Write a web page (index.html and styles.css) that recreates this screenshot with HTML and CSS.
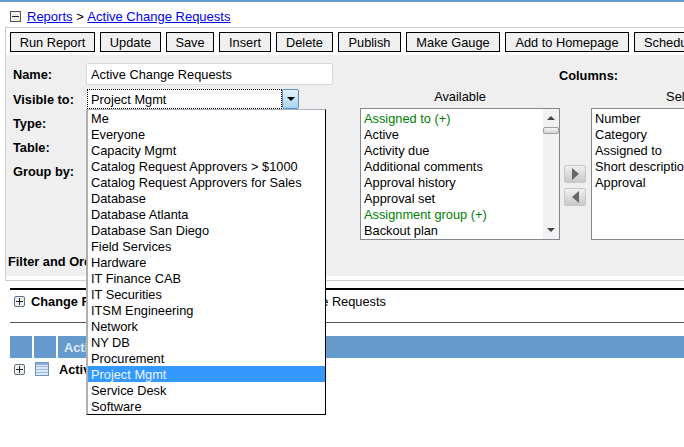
FILE: index.html
```html
<!DOCTYPE html>
<html>

<head>
    <meta name="viewport" content="width=device-width, initial-scale=1" />
    <title>Active Change Requests</title>
    <link rel="stylesheet" href="styles.css">
</head>

<body>
    <div class="topbar"></div>

    <div class="crumbs">
        <span class="box minus"></span>
        <a href="#">Reports</a> &gt; <a href="#">Active Change Requests</a>
    </div>

    <div class="panel">
        <div class="toolbar">
            <button class="w85">Run Report</button>
            <button class="w61">Update</button>
            <button class="w48">Save</button>
            <button class="w52">Insert</button>
            <button class="w57">Delete</button>
            <button class="w63">Publish</button>
            <button class="w94">Make Gauge</button>
            <button class="w124">Add to Homepage</button>
            <button class="w90">Schedule</button>
        </div>

        <div class="form">
            <div class="fields">
                <div class="row name-row">
                    <label>Name:</label>
                    <input class="name" value="Active Change Requests">
                </div>
                <div class="row">
                    <label>Visible to:</label>
                    <div class="combo">
                        <span class="combo-text">Project Mgmt</span>
                        <span class="combo-btn"></span>
                    </div>
                </div>
                <div class="row"><label>Type:</label></div>
                <div class="row"><label>Table:</label></div>
                <div class="row"><label>Group by:</label></div>
            </div>

            <div class="columns">
                <div class="columns-title">Columns:</div>
                <div class="picker">
                    <div class="pick-col">
                        <div class="pick-title">Available</div>
                        <div class="listbox available">
                            <div class="items">
                                <div class="green">Assigned to (+)</div>
                                <div>Active</div>
                                <div>Activity due</div>
                                <div>Additional comments</div>
                                <div>Approval history</div>
                                <div>Approval set</div>
                                <div class="green">Assignment group (+)</div>
                                <div>Backout plan</div>
                            </div>
                            <div class="scroll">
                                <span class="arrow up"></span>
                                <span class="thumb"></span>
                                <span class="arrow down"></span>
                            </div>
                        </div>
                    </div>
                    <div class="movers">
                        <span class="mover"><i class="tri right"></i></span>
                        <span class="mover"><i class="tri left"></i></span>
                    </div>
                    <div class="pick-col">
                        <div class="pick-title">Selected</div>
                        <div class="listbox selected">
                            <div class="items">
                                <div>Number</div>
                                <div>Category</div>
                                <div>Assigned to</div>
                                <div>Short description</div>
                                <div>Approval</div>
                            </div>
                        </div>
                    </div>
                </div>
            </div>
        </div>

        <div class="filter">Filter and Order</div>
        <div class="panel-foot"></div>
    </div>

    <div class="section">
        <span class="box plus"></span>
        <b>Change Requests</b>
        <span class="section-name">Active Change Requests</span>
    </div>

    <div class="table-head">
        <div class="cell w22"></div>
        <div class="cell w22"></div>
        <div class="cell grow">Active</div>
    </div>
    <div class="table-row">
        <span class="box plus"></span>
        <svg class="table-icon" width="14" height="14" viewBox="0 0 14 14">
            <rect x="0.5" y="0.5" width="13" height="13" fill="#dce8f7" stroke="#6a93c4" />
            <path d="M1 4.5h12M1 7.5h12M1 10.5h12" stroke="#9dbbe0" />
            <rect x="1" y="1" width="12" height="2" fill="#8fb0db" />
        </svg>
        <b>Active Change Requests</b>
    </div>

    <div class="dropdown">
        <div>Me</div>
        <div>Everyone</div>
        <div>Capacity Mgmt</div>
        <div>Catalog Request Approvers &gt; $1000</div>
        <div>Catalog Request Approvers for Sales</div>
        <div>Database</div>
        <div>Database Atlanta</div>
        <div>Database San Diego</div>
        <div>Field Services</div>
        <div>Hardware</div>
        <div>IT Finance CAB</div>
        <div>IT Securities</div>
        <div>ITSM Engineering</div>
        <div>Network</div>
        <div>NY DB</div>
        <div>Procurement</div>
        <div class="current">Project Mgmt</div>
        <div>Service Desk</div>
        <div>Software</div>
    </div>
</body>

</html>
```

FILE: styles.css
```css
html, body {
    margin: 0;
    padding: 0;
    height: 447px;
    overflow: hidden;
}

body {
    position: relative;
    background-color: white;
    font-family: "Liberation Sans", Arial, sans-serif;
    font-size: 12.8px;
    color: #000;
}

.topbar {
    height: 2px;
    background-color: #6699cc;
}

.crumbs {
    height: 25px;
    padding: 4px 0 0 10px;
    box-sizing: border-box;
    display: flex;
    align-items: center;
    white-space: pre;
    font-size: 13px;
    line-height: 16px;
}

.crumbs a {
    color: #0000ee;
}

.box {
    display: inline-block;
    position: relative;
    width: 9px;
    height: 9px;
    border: 1px solid #555;
    background-color: #eee;
    flex: none;
}

.box::before {
    content: "";
    position: absolute;
    left: 1px;
    right: 1px;
    top: 4px;
    height: 1px;
    background-color: #222;
}

.box.plus {
    border-color: #5b7185;
    border-radius: 2px;
}

.box.plus::after {
    content: "";
    position: absolute;
    top: 1px;
    bottom: 1px;
    left: 4px;
    width: 1px;
    background-color: #222;
}

.crumbs .box {
    margin-right: 6px;
}

/* panel */
.panel {
    margin-left: 5px;
    border-left: 1px solid #ccc;
    border-top: 1px solid #ccc;
    border-bottom: 1px solid #ccc;
    height: 252px;
    background-color: #efefef;
    display: flex;
    flex-direction: column;
    overflow: hidden;
}

.toolbar {
    height: 27px;
    flex: none;
    background-color: white;
    display: flex;
    gap: 5px;
    padding: 4px 0 0 4px;
    box-sizing: border-box;
}

.toolbar button {
    flex: none;
    height: 20px;
    padding: 0;
    border: 1px solid #000;
    background-color: #f0f0f0;
    font-family: inherit;
    font-size: 12.8px;
    color: #000;
    white-space: nowrap;
    overflow: hidden;
    text-align: center;
}

.w85 { width: 85px; }
.w61 { width: 61px; }
.w48 { width: 48px; }
.w52 { width: 52px; }
.w57 { width: 57px; }
.w63 { width: 63px; }
.w94 { width: 94px; }
.w124 { width: 124px; }
.toolbar .w90 { width: 90px; text-align: left; padding-left: 9px; }

.form {
    display: flex;
    height: 199px;
    flex: none;
}

.fields {
    width: 332px;
    padding: 8px 0 0 7px;
    box-sizing: border-box;
    flex: none;
}

.row {
    display: flex;
    align-items: center;
    height: 24px;
}

.row label {
    width: 74px;
    font-weight: bold;
    flex: none;
}

.name-row {
    margin-top: -1px;
    margin-bottom: 1px;
}

.name {
    width: 247px;
    height: 22px;
    box-sizing: border-box;
    padding: 0 4px;
    border: 1px solid #d8d8d8;
    background-color: white;
    font-family: inherit;
    font-size: 12.8px;
    color: #000;
    border-radius: 2px;
    margin: 0 0 0 -1px;
}

.combo {
    width: 212px;
    height: 20px;
    display: flex;
    background-color: white;
}

.combo-text {
    flex: 1;
    border: 1px dotted #000;
    padding-left: 3px;
    line-height: 19px;
}

.combo-btn {
    position: relative;
    width: 17px;
    flex: none;
    border: 1px solid #5a8fc0;
    border-radius: 2px;
    box-sizing: border-box;
    background: linear-gradient(#e6f3fb, #a8d3ef);
}

.combo-btn::after {
    content: "";
    position: absolute;
    left: 4px;
    top: 7px;
    border-left: 4px solid transparent;
    border-right: 4px solid transparent;
    border-top: 4px solid #000;
}

.columns {
    flex: 1;
}

.columns-title {
    font-weight: bold;
    padding: 13px 0 0 221px;
    line-height: 16px;
}

.picker {
    display: flex;
    padding: 4px 0 0 22px;
}

.pick-col {
    flex: none;
}

.pick-title {
    text-align: center;
    height: 16px;
    line-height: 18px;
    margin-bottom: 4px;
}

.listbox {
    width: 200px;
    height: 132px;
    border: 1px solid #828790;
    box-sizing: border-box;
    background-color: white;
    display: flex;
    overflow: hidden;
}

.items {
    flex: 1;
    padding: 2px 0 0 3px;
    line-height: 16px;
    white-space: nowrap;
}

.green {
    color: #008000;
}

.scroll {
    width: 16px;
    flex: none;
    position: relative;
    background-color: #f2f2f2;
}

.thumb {
    position: absolute;
    left: 0;
    top: 18px;
    width: 14px;
    height: 5px;
    border: 1px solid #a0a0a0;
    border-radius: 2px;
    background: linear-gradient(#f4f4f4, #d4d4d4);
}

.arrow {
    position: absolute;
    left: 4px;
    border-left: 4px solid transparent;
    border-right: 4px solid transparent;
}

.arrow.up {
    top: 7px;
    border-bottom: 4px solid #444;
}

.arrow.down {
    bottom: 7px;
    border-top: 4px solid #444;
}

.movers {
    width: 31px;
    display: flex;
    flex-direction: column;
    gap: 5px;
    padding: 77px 0 0 4px;
    box-sizing: border-box;
}

.mover {
    display: flex;
    align-items: center;
    justify-content: center;
    width: 20px;
    height: 16px;
    border: 1px solid #c8c8c8;
    border-radius: 2px;
    background: linear-gradient(#f0f0f0, #c8c8c8);
}

.tri {
    width: 0;
    height: 0;
    border-top: 6px solid transparent;
    border-bottom: 6px solid transparent;
}

.tri.right {
    border-left: 7px solid #666;
}

.tri.left {
    border-right: 7px solid #666;
}

.filter {
    font-weight: bold;
    padding-left: 2px;
    line-height: 16px;
    height: 22px;
    flex: none;
}

.panel-foot {
    flex: 1;
    background-color: white;
}

/* below panel */
.section {
    margin: 7px 0 0 10px;
    border-top: 2px solid #000;
    border-bottom: 1px solid #555;
    height: 22px;
    padding: 0 0 10px 4px;
    display: flex;
    align-items: center;
    white-space: nowrap;
}

.section b {
    margin-left: 6px;
}

.section-name {
    margin-left: 106px;
}

.table-head {
    margin: 13px 0 0 10px;
    height: 22px;
    display: flex;
    gap: 2px;
}

.cell {
    background-color: #6699cc;
    color: #dfe9f5;
    font-weight: bold;
    line-height: 24px;
    padding-left: 6px;
    box-sizing: border-box;
}

.w22 { width: 22px; }
.grow { flex: 1; }

.table-row {
    margin-left: 14px;
    height: 22px;
    display: flex;
    align-items: center;
    white-space: nowrap;
}

.table-icon {
    margin-left: 10px;
    flex: none;
}

.table-row b {
    margin-left: 10px;
}

/* open list of the Visible to combo */
.dropdown {
    position: absolute;
    left: 86px;
    top: 109px;
    width: 240px;
    height: 306px;
    box-sizing: border-box;
    background-color: white;
    border: 1px solid #000;
    border-left: 2px solid #b0b0b0;
    border-top: 1px solid #a9b3c0;
}

.dropdown div {
    padding-left: 3px;
    height: 16px;
    line-height: 18px;
    white-space: nowrap;
}

.dropdown .current {
    background-color: #3399ff;
    color: #eaf4ff;
}
```
